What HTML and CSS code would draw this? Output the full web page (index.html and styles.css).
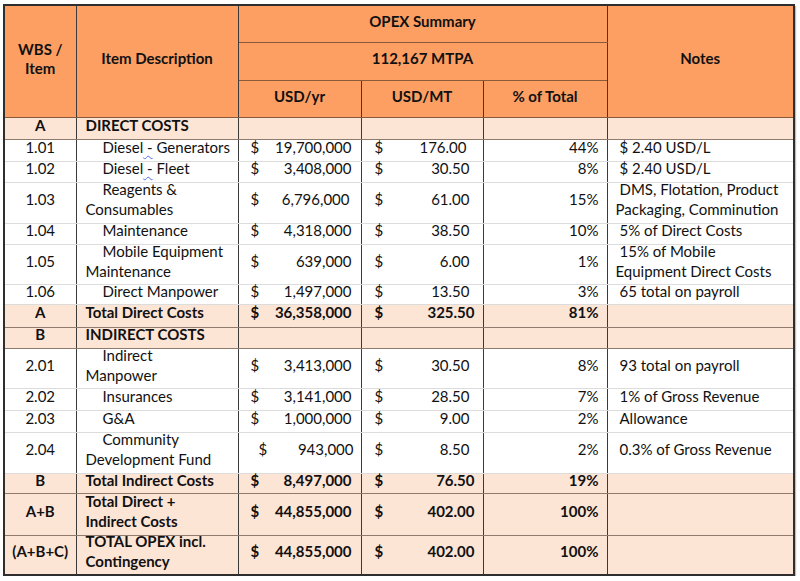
FILE: index.html
```html
<!DOCTYPE html>
<html>
<head>
<meta charset="utf-8">
<link rel="stylesheet" href="styles.css">
</head>
<body>
<table class="opex">
  <colgroup>
    <col class="c-wbs"><col class="c-desc"><col class="c-yr"><col class="c-mt"><col class="c-pct"><col class="c-notes">
  </colgroup>
  <thead>
    <tr class="h1">
      <th rowspan="3" class="wbs-h">WBS /<br>Item</th>
      <th rowspan="3">Item Description</th>
      <th colspan="3">OPEX Summary</th>
      <th rowspan="3">Notes</th>
    </tr>
    <tr class="h2"><th colspan="3">112,167 MTPA</th></tr>
    <tr class="h3"><th>USD/yr</th><th>USD/MT</th><th>% of Total</th></tr>
  </thead>
  <tbody>
    <tr class="sec r22"><td class="wbs">A</td><td class="desc">DIRECT COSTS</td><td></td><td></td><td></td><td></td></tr>
    <tr class="r22 first"><td class="wbs">1.01</td><td class="desc"><span class="lead">Diesel<span class="squig"> -</span> Generators</span></td><td class="yr"><div class="acc"><span>$</span><span>19,700,000</span></div></td><td class="mt"><div class="acc n176"><span>$</span><span>176.00</span></div></td><td class="pct">44%</td><td class="note"><span class="nlead">$ 2.40 USD/L</span></td></tr>
    <tr class="r21"><td class="wbs">1.02</td><td class="desc"><span class="lead">Diesel<span class="squig"> -</span> Fleet</span></td><td class="yr"><div class="acc"><span>$</span><span>3,408,000</span></div></td><td class="mt"><div class="acc"><span>$</span><span>30.50</span></div></td><td class="pct">8%</td><td class="note"><span class="nlead">$ 2.40 USD/L</span></td></tr>
    <tr class="r41"><td class="wbs">1.03</td><td class="desc"><span class="lead">Reagents &amp;<br>Consumables</span></td><td class="yr"><div class="acc"><span>$</span><span class="nudge">6,796,000</span></div></td><td class="mt"><div class="acc"><span>$</span><span>61.00</span></div></td><td class="pct">15%</td><td class="note"><span class="nlead">DMS, Flotation, Product<br>Packaging, Comminution</span></td></tr>
    <tr class="r21"><td class="wbs">1.04</td><td class="desc"><span class="lead">Maintenance</span></td><td class="yr"><div class="acc"><span>$</span><span>4,318,000</span></div></td><td class="mt"><div class="acc"><span>$</span><span>38.50</span></div></td><td class="pct">10%</td><td class="note"><span class="nlead">5% of Direct Costs</span></td></tr>
    <tr class="r40"><td class="wbs">1.05</td><td class="desc"><span class="lead">Mobile Equipment<br>Maintenance</span></td><td class="yr"><div class="acc"><span>$</span><span>639,000</span></div></td><td class="mt"><div class="acc"><span>$</span><span>6.00</span></div></td><td class="pct">1%</td><td class="note"><span class="nlead">15% of Mobile<br>Equipment Direct Costs</span></td></tr>
    <tr class="r20"><td class="wbs">1.06</td><td class="desc"><span class="lead">Direct Manpower</span></td><td class="yr"><div class="acc"><span>$</span><span>1,497,000</span></div></td><td class="mt"><div class="acc"><span>$</span><span>13.50</span></div></td><td class="pct">3%</td><td class="note"><span class="nlead">65 total on payroll</span></td></tr>
    <tr class="sec tot r23"><td class="wbs">A</td><td class="desc">Total Direct Costs</td><td class="yr"><div class="acc"><span>$</span><span>36,358,000</span></div></td><td class="mt"><div class="acc"><span>$</span><span>325.50</span></div></td><td class="pct">81%</td><td></td></tr>
    <tr class="sec r21"><td class="wbs">B</td><td class="desc">INDIRECT COSTS</td><td></td><td></td><td></td><td></td></tr>
    <tr class="r40 first"><td class="wbs">2.01</td><td class="desc"><span class="lead">Indirect<br>Manpower</span></td><td class="yr"><div class="acc"><span>$</span><span>3,413,000</span></div></td><td class="mt"><div class="acc"><span>$</span><span>30.50</span></div></td><td class="pct">8%</td><td class="note"><span class="nlead">93 total on payroll</span></td></tr>
    <tr class="r22"><td class="wbs">2.02</td><td class="desc"><span class="lead">Insurances</span></td><td class="yr"><div class="acc"><span>$</span><span>3,141,000</span></div></td><td class="mt"><div class="acc"><span>$</span><span>28.50</span></div></td><td class="pct">7%</td><td class="note"><span class="nlead">1% of Gross Revenue</span></td></tr>
    <tr class="r22"><td class="wbs">2.03</td><td class="desc"><span class="lead">G&amp;A</span></td><td class="yr"><div class="acc"><span>$</span><span>1,000,000</span></div></td><td class="mt"><div class="acc"><span>$</span><span>9.00</span></div></td><td class="pct">2%</td><td class="note"><span class="nlead">Allowance</span></td></tr>
    <tr class="r41"><td class="wbs">2.04</td><td class="desc"><span class="lead">Community<br>Development Fund</span></td><td class="yr"><div class="acc shift"><span>$</span><span>943,000</span></div></td><td class="mt"><div class="acc"><span>$</span><span>8.50</span></div></td><td class="pct">2%</td><td class="note"><span class="nlead">0.3% of Gross Revenue</span></td></tr>
    <tr class="sec tot r20"><td class="wbs">B</td><td class="desc">Total Indirect Costs</td><td class="yr"><div class="acc"><span>$</span><span>8,497,000</span></div></td><td class="mt"><div class="acc"><span>$</span><span>76.50</span></div></td><td class="pct">19%</td><td></td></tr>
    <tr class="sec tot r42"><td class="wbs">A+B</td><td class="desc">Total Direct +<br>Indirect Costs</td><td class="yr"><div class="acc"><span>$</span><span>44,855,000</span></div></td><td class="mt"><div class="acc"><span>$</span><span>402.00</span></div></td><td class="pct">100%</td><td></td></tr>
    <tr class="sec tot r40 last"><td class="wbs">(A+B+C)</td><td class="desc">TOTAL OPEX incl.<br>Contingency</td><td class="yr"><div class="acc"><span>$</span><span>44,855,000</span></div></td><td class="mt"><div class="acc"><span>$</span><span>402.00</span></div></td><td class="pct">100%</td><td></td></tr>
  </tbody>
</table>
</body>
</html>
```

FILE: styles.css
```css
html, body {
  margin: 0;
  padding: 0;
  background: #ffffff;
}
body {
  padding: 4px 0 0 3px;
  font-family: Lato, "Open Sans", sans-serif;
  font-size: 15px;
  color: #111;
}
.opex {
  border-collapse: collapse;
  table-layout: fixed;
  width: 790px;
  border: 2px solid #2e2e2e;
  box-shadow: 1px 2px 1px rgba(0,0,0,0.25);
}
.c-wbs { width: 72px; }
.c-desc { width: 162px; }
.c-yr { width: 123px; }
.c-mt { width: 122px; }
.c-pct { width: 124px; }
.c-notes { width: 187px; }

th, td {
  padding: 0;
  vertical-align: middle;
}
th {
  line-height: 19px;
  background: #fd9f63;
  font-weight: 700;
  text-align: center;
  padding-bottom: 5px;
  border: 1px solid #8a5a3c;
  border-left-color: #3a3a3a;
  border-right-color: #3a3a3a;
}
.h1 { height: 37px; }
.h2 { height: 38px; }
.h3 { height: 37px; }
.h1 th { border-top-color: #2e2e2e; }

td {
  line-height: 20px;
  border-left: 1px solid #3a3a3a;
  border-right: 1px solid #3a3a3a;
  border-top: 1px solid #dcdcdc;
  border-bottom: 1px solid #dcdcdc;
}
/* lift the cell text toward the top, as the spreadsheet does */
td::before {
  content: "";
  display: block;
  margin-top: -7px;
}
.sec td {
  background: #fde5d6;
  border-top: 1px solid #8f7a6e;
  border-bottom: 1px solid #8f7a6e;
}
.sec td, .tot td { font-weight: 700; }
tr.first td { border-top-color: #8f7a6e; }
thead tr.h3 th { border-bottom: 1px solid #8a5a3c; }

.r20 { height: 20px; }
.r21 { height: 21px; }
.r22 { height: 22px; }
.r23 { height: 23px; }
.r40 { height: 40px; }
.r41 { height: 41px; }
.r42 { height: 42px; }

.wbs { text-align: center; }
.desc { padding-left: 9px; padding-right: 2px; }
.lead { padding-left: 17px; }
.note { padding-left: 8px; padding-right: 2px; }
.nlead { padding-left: 4px; }
.pct { text-align: right; padding-right: 8px; }

.acc {
  display: flex;
  justify-content: space-between;
}
.yr .acc { padding: 0 9px 0 12px; }
.mt .acc { padding: 0 13px 0 13px; }
.tot .mt .acc { padding: 0 8px 0 13px; }
.mt .acc.n176 { padding-right: 16px; }
.yr .acc.shift { padding-left: 20px; padding-right: 7px; }
.nudge { margin-right: 2px; }

.squig {
  text-decoration: underline wavy #4a6fe8;
  text-decoration-thickness: 1px;
  text-underline-offset: 2px;
}
```
